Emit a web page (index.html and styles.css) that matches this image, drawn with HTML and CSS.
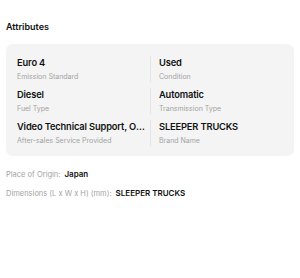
FILE: index.html
```html
<!DOCTYPE html>
<html>
<head>
    <meta charset="UTF-8">
    <title>Attributes</title>
    <link rel="stylesheet" href="styles.css">
</head>
<body>
    <div class="attrs">
        <h3 class="attrs-title">Attributes</h3>
        <div class="attrs-card">
            <div class="attr">
                <div class="attr-value">Euro 4</div>
                <div class="attr-name">Emission Standard</div>
            </div>
            <div class="attr attr-right">
                <div class="attr-value">Used</div>
                <div class="attr-name">Condition</div>
            </div>
            <div class="attr">
                <div class="attr-value">Diesel</div>
                <div class="attr-name">Fuel Type</div>
            </div>
            <div class="attr attr-right">
                <div class="attr-value">Automatic</div>
                <div class="attr-name">Transmission Type</div>
            </div>
            <div class="attr">
                <div class="attr-value">Video Technical Support, Online Support</div>
                <div class="attr-name">After-sales Service Provided</div>
            </div>
            <div class="attr attr-right">
                <div class="attr-value">SLEEPER TRUCKS</div>
                <div class="attr-name">Brand Name</div>
            </div>
        </div>
        <div class="extras">
            <div class="extra">
                <span class="extra-name">Place of Origin:</span>
                <span class="extra-value">Japan</span>
            </div>
            <div class="extra">
                <span class="extra-name">Dimensions (L x W x H) (mm):</span>
                <span class="extra-value">SLEEPER TRUCKS</span>
            </div>
        </div>
    </div>
</body>
</html>
```

FILE: styles.css
```css
body {
  margin: 0;
  background-color: #ffffff;
  font-family: Inter, "Noto Sans", sans-serif;
  color: #111111;
}

.attrs {
  padding: 20px 6px 0 6px;
}

/* section heading */
.attrs-title {
  margin: 0 0 10px 0;
  font-size: 9px;
  line-height: 14px;
  font-weight: 600;
}

/* grey card holding the two-column list */
.attrs-card {
  display: grid;
  grid-template-columns: 1fr 1fr;
  row-gap: 6px;
  background-color: #f4f4f4;
  border-radius: 7px;
  padding: 12px 11px 10px 11px;
}

.attr {
  min-width: 0;
  padding-right: 2px;
}

.attr-right {
  border-left: 1px solid #e4e4e4;
  padding-left: 8px;
}

.attr-value {
  font-size: 9.3px;
  line-height: 14px;
  font-weight: 600;
  letter-spacing: -0.015em;
  white-space: nowrap;
  overflow: hidden;
  text-overflow: ellipsis;
}

.attr-name {
  margin-top: 1px;
  font-size: 7px;
  line-height: 11px;
  color: #a3a3a3;
}

/* plain rows under the card */
.extras {
  display: flex;
  flex-direction: column;
  gap: 7px;
  margin-top: 12px;
}

.extra {
  display: flex;
  align-items: baseline;
  gap: 4px;
  height: 12px;
  line-height: 12px;
  font-size: 7.5px;
}

.extra-name {
  color: #a3a3a3;
}

.extra-value {
  font-size: 8px;
  font-weight: 600;
}
```
